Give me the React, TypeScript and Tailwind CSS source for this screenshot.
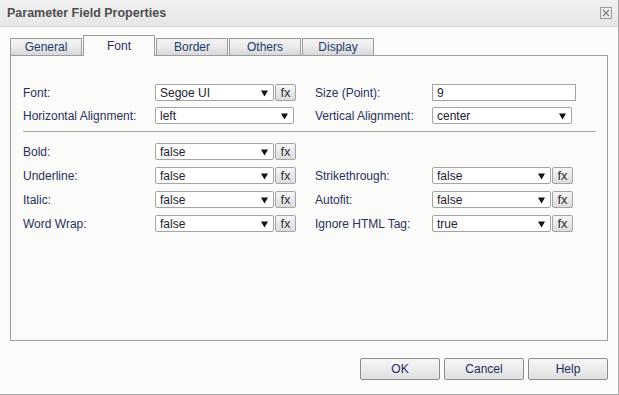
import React from 'react';

const font = "font-['Liberation_Sans',Arial,sans-serif]";

function Arrow() {
  return (
    <svg width="7" height="7" viewBox="0 0 7 7" className="absolute right-[5px] top-1/2 -translate-y-1/2">
      <polygon points="0,1 7,1 3.5,7" fill="#111" />
    </svg>
  );
}

function Select({ value, w }: { value: string; w: string }) {
  return (
    <div className={`relative h-[17px] ${w} border border-[#a3a3a3] rounded-[2px] bg-white flex items-center pl-[4px] text-[12px] text-[#231b2e]`}>
      {value}
      <Arrow />
    </div>
  );
}

function Fx() {
  return (
    <div className="ml-px w-[21px] h-[17px] border border-[#a3a3a3] rounded-[2px] bg-gradient-to-b from-[#f7f7f7] to-[#dddddd] flex items-center justify-center text-[13px] text-[#333] leading-none">
      fx
    </div>
  );
}

function Label({ text, w }: { text: string; w: string }) {
  return <div className={`${w} text-[12px] text-[#2a2f5c]`}>{text}</div>;
}

function Row({ left, right, className = '' }: { left: React.ReactNode; right?: React.ReactNode; className?: string }) {
  return (
    <div className={`flex items-center h-[17px] ${className}`}>
      <div className="w-[292px] flex items-center">{left}</div>
      {right && <div className="flex items-center">{right}</div>}
    </div>
  );
}

const tabs = ['General', 'Font', 'Border', 'Others', 'Display'];

export default function App() {
  return (
    <div className={`w-[619px] h-[395px] bg-[#fbfcfa] flex flex-col border-r border-b border-[#a9a9a9] ${font}`}>
      <div className="h-[27px] shrink-0 bg-gradient-to-b from-[#f0f0f0] to-[#e7e7e7] border-b border-[#d4d4d4] flex items-center justify-between pl-[7px] pr-[6px]">
        <span className="text-[12.5px] font-bold text-[#4f4f4f]">Parameter Field Properties</span>
        <div className="w-[12px] h-[12px] border border-[#9a9a9a] flex items-center justify-center">
          <svg width="8" height="8" viewBox="0 0 8 8">
            <path d="M1 1L7 7M7 1L1 7" stroke="#7a7a7a" strokeWidth="1.2" />
          </svg>
        </div>
      </div>

      <div className="flex-1 flex flex-col px-[10px] pt-[8px]">
        <div className="flex items-end gap-px h-[21px] -mb-px relative z-10">
          {tabs.map((t) =>
            t === 'Font' ? (
              <div key={t} className="w-[72px] h-[21px] border border-b-0 border-[#9c9c9c] bg-[#fbfcfa] flex items-center justify-center text-[12px] text-[#33285e]">
                {t}
              </div>
            ) : (
              <div key={t} className="w-[72px] h-[18px] border border-[#9c9c9c] bg-gradient-to-b from-[#f3f3f3] via-[#ebebeb] to-[#d6d6d6] flex items-center justify-center text-[12px] text-[#233a6b]">
                {t}
              </div>
            )
          )}
        </div>

        <div className="h-[286px] border border-[#9e9e9e] pl-[12px] pt-[28px]">
          <Row
            left={<><Label text="Font:" w="w-[132px]" /><Select value="Segoe UI" w="w-[119px]" /><Fx /></>}
            right={<><Label text="Size (Point):" w="w-[117px]" /><div className="h-[17px] w-[144px] border border-[#a3a3a3] bg-white flex items-center pl-[4px] text-[12px] text-[#231b2e]">9</div></>}
          />
          <Row
            className="mt-[6px]"
            left={<><Label text="Horizontal Alignment:" w="w-[132px]" /><Select value="left" w="w-[139px]" /></>}
            right={<><Label text="Vertical Alignment:" w="w-[117px]" /><Select value="center" w="w-[140px]" /></>}
          />
          <div className="mt-[7px] w-[573px] border-t border-[#a6a6a6]" />
          <Row
            className="mt-[11px]"
            left={<><Label text="Bold:" w="w-[132px]" /><Select value="false" w="w-[119px]" /><Fx /></>}
          />
          <Row
            className="mt-[7px]"
            left={<><Label text="Underline:" w="w-[132px]" /><Select value="false" w="w-[119px]" /><Fx /></>}
            right={<><Label text="Strikethrough:" w="w-[117px]" /><Select value="false" w="w-[119px]" /><Fx /></>}
          />
          <Row
            className="mt-[7px]"
            left={<><Label text="Italic:" w="w-[132px]" /><Select value="false" w="w-[119px]" /><Fx /></>}
            right={<><Label text="Autofit:" w="w-[117px]" /><Select value="false" w="w-[119px]" /><Fx /></>}
          />
          <Row
            className="mt-[7px]"
            left={<><Label text="Word Wrap:" w="w-[132px]" /><Select value="false" w="w-[119px]" /><Fx /></>}
            right={<><Label text="Ignore HTML Tag:" w="w-[117px]" /><Select value="true" w="w-[119px]" /><Fx /></>}
          />
        </div>

        <div className="mt-[17px] flex justify-end gap-[4px]">
          {['OK', 'Cancel', 'Help'].map((b) => (
            <div key={b} className="w-[80px] h-[22px] border border-[#8c8c8c] rounded-[2px] bg-gradient-to-b from-[#f6f6f6] via-[#ececec] to-[#dedede] flex items-center justify-center text-[12px] text-[#1e2d5e]">
              {b}
            </div>
          ))}
        </div>
      </div>
    </div>
  );
}
